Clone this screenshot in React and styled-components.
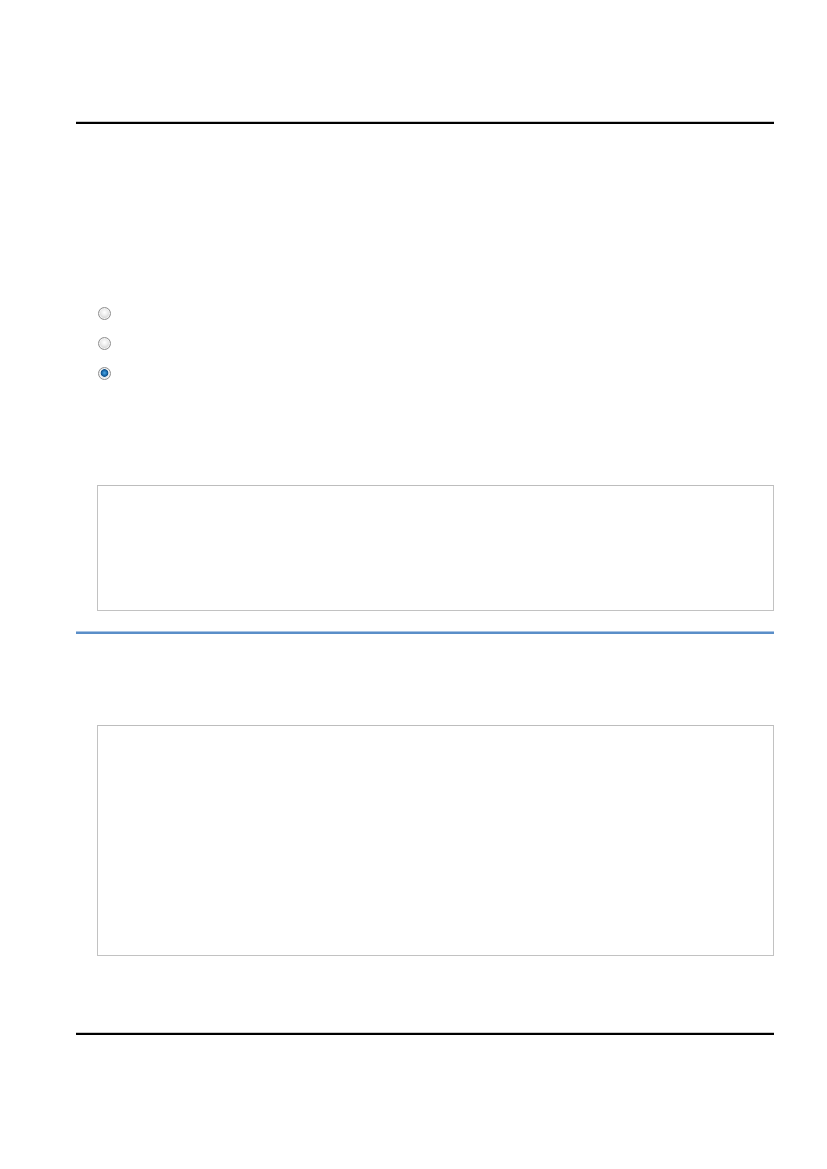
import styled, { createGlobalStyle } from "styled-components";

const GlobalStyle = createGlobalStyle`
  html, body {
    margin: 0;
    padding: 0;
    background: #fff;
    font-family: "Liberation Sans", Arial, sans-serif;
  }
`;

const Page = styled.div`
  width: 827px;
  height: 1169px;
  box-sizing: border-box;
  padding: 121px 53px 0 76px;
  display: flex;
  flex-direction: column;
`;

const Rule = styled.div`
  height: 2px;
  background: ${(p) => (p.$blue ? "#5a8ec8" : "#000")};
  border-top: 1px solid ${(p) => (p.$blue ? "#a9c4e4" : "#c8c8c8")};
  margin-top: ${(p) => p.$top || 0}px;
`;

const RadioList = styled.div`
  display: flex;
  flex-direction: column;
  gap: 17px;
  margin-top: 183px;
  padding-left: 22px;
`;

const Radio = styled.span`
  display: block;
  width: 13px;
  height: 13px;
  border-radius: 50%;
  box-sizing: border-box;
  border: 1px solid #8f8f8f;
  background: ${(p) =>
    p.$checked
      ? "radial-gradient(circle at 50% 45%, #4aa8e6 0, #1a6aad 2.5px, #0d4f86 3.5px, #e8eef3 4.2px, #cfd5db 6.5px)"
      : "radial-gradient(circle at 50% 40%, #ffffff 0, #eeeeee 3px, #cdcdcd 6.5px)"};
  box-shadow: inset 0 0 0 1px #f4f4f4;
`;

const Box = styled.div`
  margin-left: 21px;
  margin-top: ${(p) => p.$top}px;
  height: ${(p) => p.$h}px;
  border: 1px solid #c2c2c2;
  border-top-color: #bdbdbd;
  box-sizing: border-box;
`;

export default function App() {
  return (
    <>
      <GlobalStyle />
      <Page>
        <Rule />
        <RadioList>
          <Radio />
          <Radio />
          <Radio $checked />
        </RadioList>
        <Box $top={105} $h={126} />
        <Rule $blue $top={20} />
        <Box $top={91} $h={231} />
        <Rule $top={76} />
      </Page>
    </>
  );
}
